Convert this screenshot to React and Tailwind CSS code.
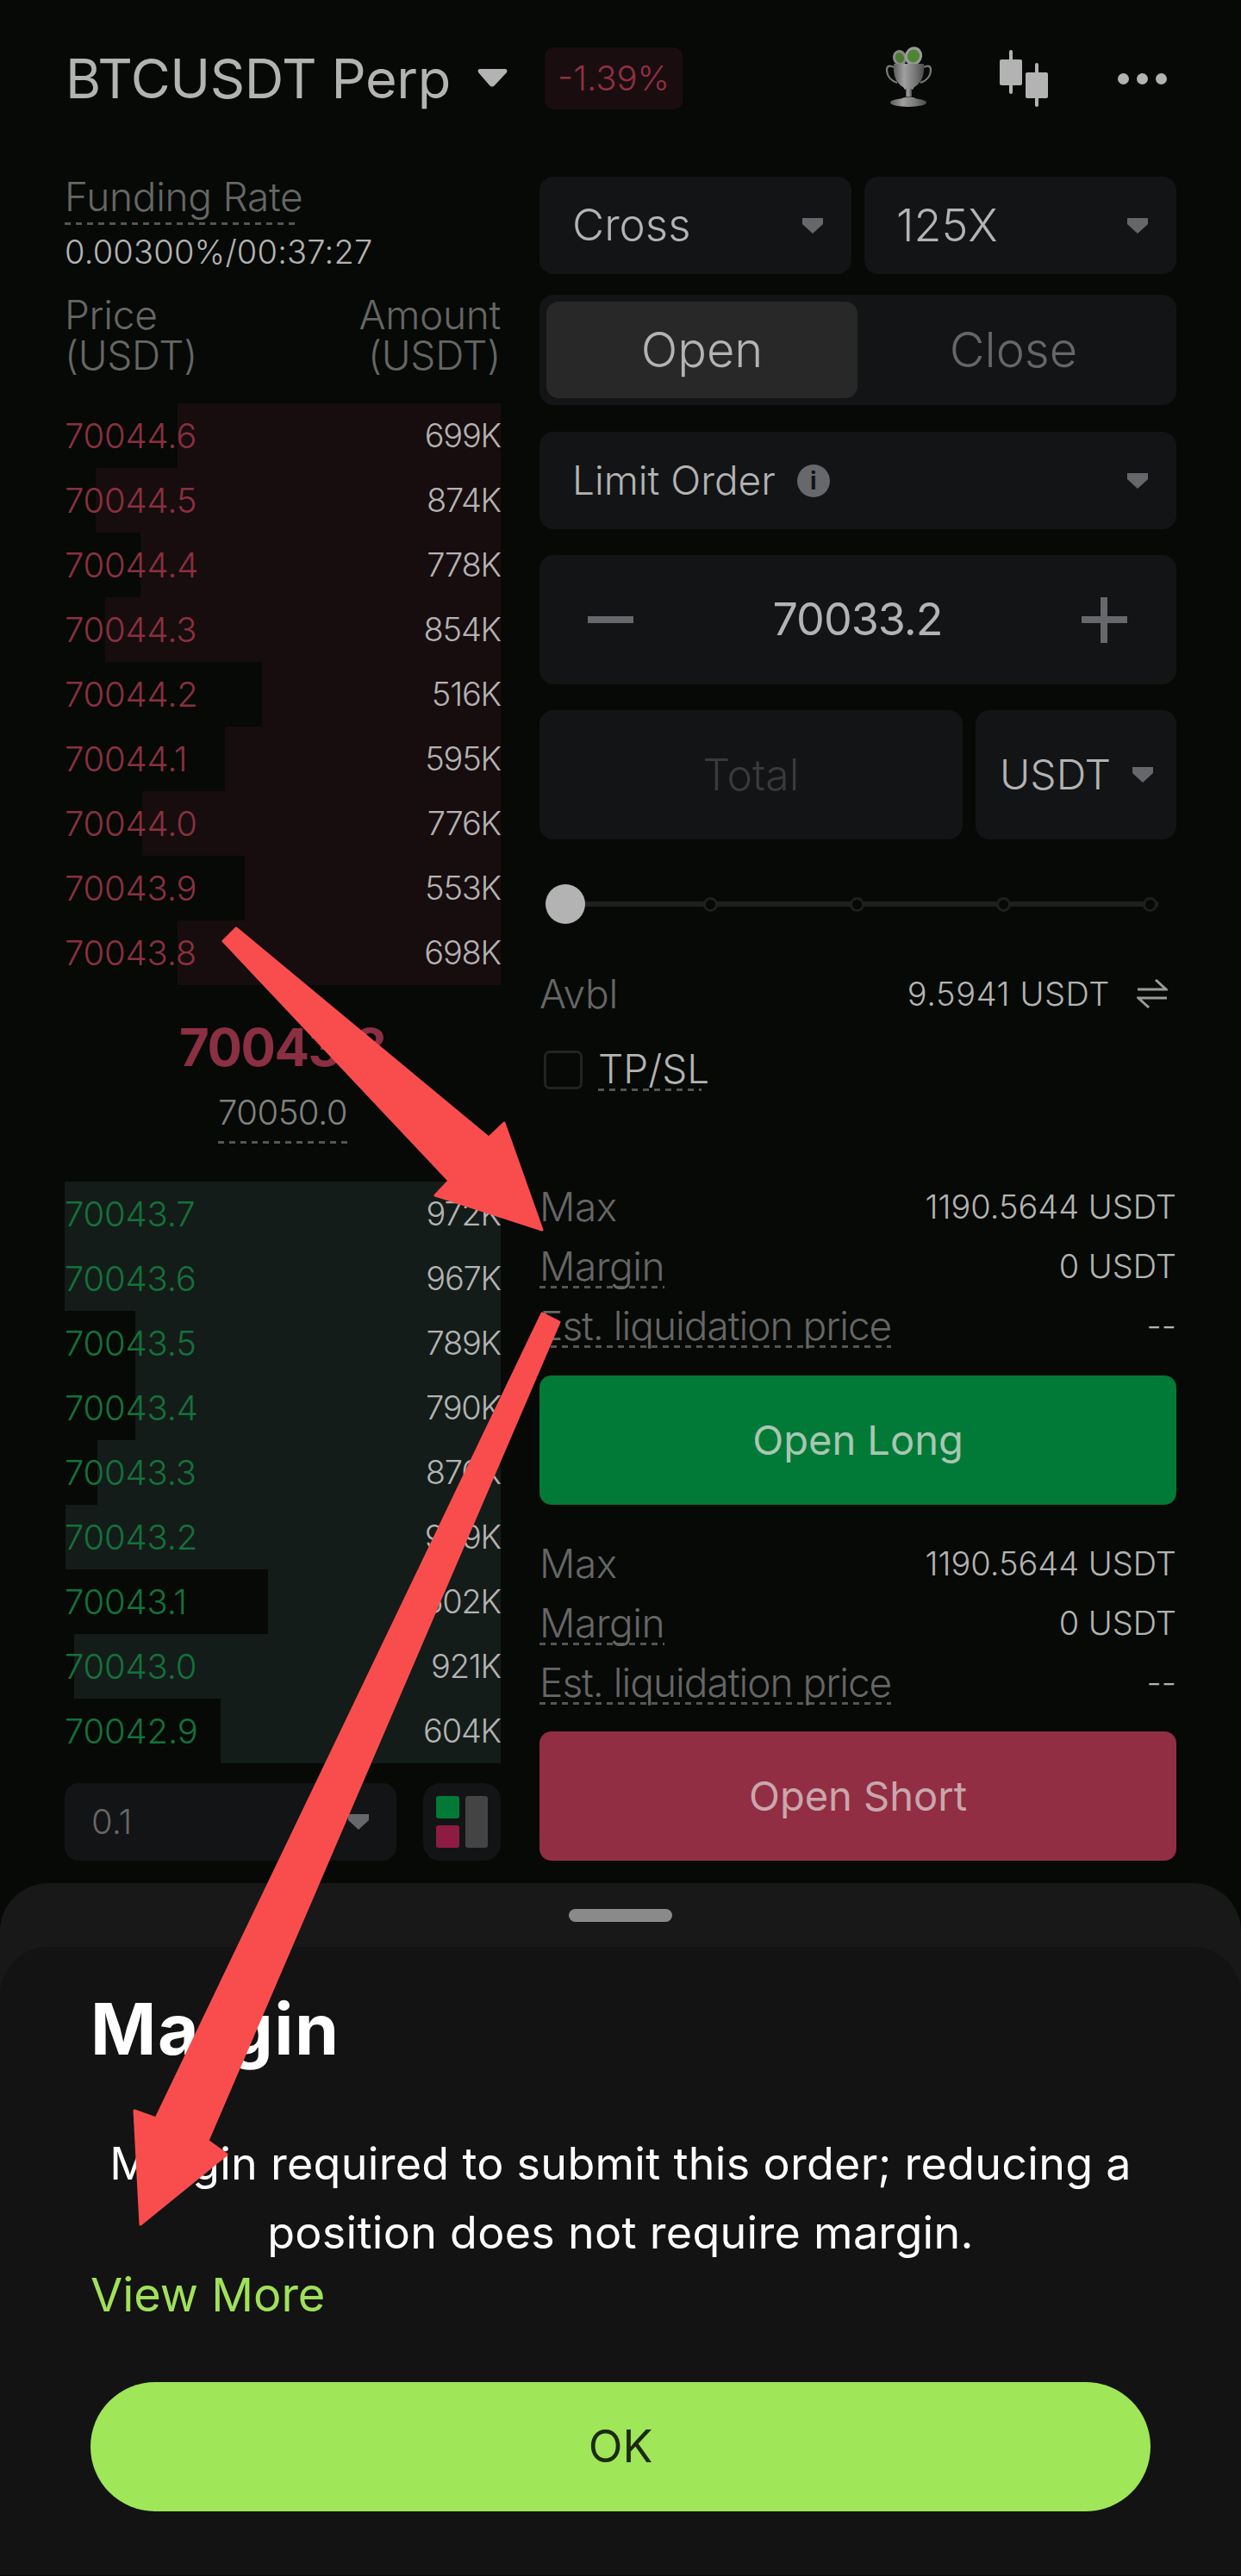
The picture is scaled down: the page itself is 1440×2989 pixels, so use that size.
import React from 'react';

const asks = [
  ['70044.6', '699K', 206], ['70044.5', '874K', 111], ['70044.4', '778K', 163],
  ['70044.3', '854K', 122], ['70044.2', '516K', 304], ['70044.1', '595K', 261],
  ['70044.0', '776K', 165], ['70043.9', '553K', 284], ['70043.8', '698K', 206],
];
const bids = [
  ['70043.7', '972K', 75], ['70043.6', '967K', 75], ['70043.5', '789K', 157],
  ['70043.4', '790K', 157], ['70043.3', '870K', 113], ['70043.2', '999K', 76],
  ['70043.1', '502K', 311], ['70043.0', '921K', 86], ['70042.9', '604K', 256],
];

function Caret({ className = '' }) {
  return (
    <svg viewBox="0 0 24 18" className={`w-[24px] h-[18px] shrink-0 ${className}`}>
      <path d="M0 0h24v7L12 18 0 7z" fill="#66676b" />
    </svg>
  );
}

function Dash({ className = '' }) {
  return <div className={`h-[3px] bg-[repeating-linear-gradient(90deg,#555_0_7px,transparent_7px_13px)] ${className}`} />;
}

function Box({ className = '', children }) {
  return <div className={`bg-[#131415] rounded-[16px] flex items-center ${className}`}>{children}</div>;
}

function BookRow({ price, amount, left, priceColor, barColor }) {
  return (
    <div className="relative h-[75px] flex items-center justify-between font-light">
      {/* depth bar, from its left edge to the column's right edge */}
      <div className={`absolute top-0 bottom-0 right-0 ${barColor}`} style={{ left: left - 75 }} />
      <span className={`relative text-[40px] tracking-[-0.2px] ${priceColor}`}>{price}</span>
      <span className="relative text-[38px] tracking-[-1.2px] text-[#b3b3b3]">{amount}</span>
    </div>
  );
}

function InfoRow({ label, value, dash, labelClass = 'tracking-[-0.5px]' }) {
  return (
    <div className="h-[50px] flex items-start justify-between">
      <div className={`mt-[2px] text-[46px] leading-[46px] font-light text-[#666] ${labelClass}`}>
        {label}
        {dash && <Dash className="w-full" />}
      </div>
      <span className="text-[38px] leading-[50px] font-light text-[#b3b3b3]">{value}</span>
    </div>
  );
}

function Trophy() {
  return (
    <svg viewBox="0 0 70 90" className="w-[70px] h-[90px] shrink-0">
      <defs>
        <linearGradient id="silver" x1="0" x2="1" y1="0" y2="0">
          <stop offset="0" stopColor="#5c5c5c" />
          <stop offset="0.35" stopColor="#a0a0a0" />
          <stop offset="0.7" stopColor="#787878" />
          <stop offset="1" stopColor="#4c4c4c" />
        </linearGradient>
      </defs>
      <ellipse cx="24" cy="21" rx="8" ry="9" fill="#8a8a8a" transform="rotate(-20 24 21)" />
      <ellipse cx="24" cy="21" rx="5" ry="6" fill="#4a7a30" transform="rotate(-20 24 21)" />
      <ellipse cx="40" cy="19" rx="10" ry="11" fill="#9a9a9a" transform="rotate(25 40 19)" />
      <ellipse cx="40" cy="19" rx="7" ry="7.5" fill="#4f8433" transform="rotate(25 40 19)" />
      <path d="M17 32C12 29 9 31 9 35c0 8 6 13 12 15M52 32c5-3 8-1 8 3 0 8-6 13-12 15" fill="none" stroke="#7a7a7a" strokeWidth="2.2" />
      <path d="M17 28h35c1 12-2 22-11 27l-2 3h-9l-2-3c-9-5-12-15-11-27z" fill="url(#silver)" />
      <rect x="31" y="57" width="7" height="9" fill="url(#silver)" />
      <path d="M27 68c2-2 13-2 15 0l2 3H25z" fill="#8c8c8c" />
      <ellipse cx="34" cy="73" rx="21" ry="5" fill="url(#silver)" />
    </svg>
  );
}

function Candles() {
  return (
    <svg viewBox="0 0 56 66" className="w-[56px] h-[66px] shrink-0" fill="#b3b3b3">
      <rect x="11" y="0" width="4" height="51" rx="2" />
      <rect x="0" y="11" width="26" height="30" rx="2" />
      <rect x="41" y="15" width="4" height="51" rx="2" />
      <rect x="30" y="26" width="26" height="30" rx="2" />
    </svg>
  );
}

function SwapIcon() {
  return (
    <svg viewBox="0 0 36 34" className="w-[36px] h-[34px] shrink-0" fill="none" stroke="#9a9a9a" strokeWidth="3">
      <path d="M1 12h33L22 1M35 22H2l12 11" />
    </svg>
  );
}

function SliderDot({ className = '' }) {
  return <div className={`relative w-[17px] h-[17px] rounded-full bg-[#060905] border-[3px] border-[#1f1f1f] shrink-0 ${className}`} />;
}

export default function App() {
  return (
    <div className="relative w-[1440px] h-[2989px] overflow-hidden bg-[#060905] font-['Inter',sans-serif]">
      {/* Header */}
      <div className="flex items-center h-[72px] mt-[55px] pt-0 pl-[76px]">
        <div className="w-[477px] shrink-0 text-[63px] leading-[72px] font-normal text-[#b3b3b3] tracking-[-0.4px]">BTCUSDT Perp</div>
        <svg viewBox="0 0 37 24" className="w-[37px] h-[24px] shrink-0 -mt-[2px]">
          <path d="M4 2h29c2 0 3 2 2 4L21 21c-2 2-4 2-6 0L2 6C1 4 2 2 4 2z" fill="#b3b3b3" />
        </svg>
        <div className="ml-[42px] w-[160px] h-[72px] shrink-0 rounded-[10px] bg-[#1a0d0f] flex items-center justify-center text-[40px] font-light text-[#8f3042]">-1.39%</div>
        <div className="ml-[228px]"><Trophy /></div>
        <div className="ml-[70px]"><Candles /></div>
        <div className="ml-[81px] flex items-center gap-[9px]">
          <div className="w-[13px] h-[13px] rounded-full bg-[#b3b3b3]" />
          <div className="w-[13px] h-[13px] rounded-full bg-[#b3b3b3]" />
          <div className="w-[13px] h-[13px] rounded-full bg-[#b3b3b3]" />
        </div>
      </div>

      <div className="flex items-start mt-[78px] ml-[75px]">
        {/* Order book */}
        <div className="w-[506px] shrink-0">
          <div className="inline-block text-[46px] leading-[46px] font-light text-[#666] tracking-[-0.3px]">
            Funding Rate
            <Dash className="mt-[7px] w-[270px]" />
          </div>
          <div className="mt-[8px] text-[38px] leading-[46px] font-light text-[#b3b3b3] tracking-[0.2px]">0.00300%/00:37:27</div>
          <div className="mt-[27px] flex justify-between text-[46px] leading-[47px] font-light text-[#666] tracking-[-0.3px]">
            <div>Price<br />(USDT)</div>
            <div className="text-right">Amount<br />(USDT)</div>
          </div>
          <div className="mt-[32px]">
            {asks.map(([price, amount, left]) => (
              <BookRow key={price} price={price} amount={amount} left={left} priceColor="text-[#8a3040]" barColor="bg-[#170d0e]" />
            ))}
          </div>
          <div className="mt-[37px] text-center text-[60px] leading-[70px] font-bold text-[#8b2f42] tracking-[-1.5px]">70043.8</div>
          <div className="mt-[18px] flex flex-col items-center">
            <div className="text-[40px] leading-[46px] font-light text-[#808080] tracking-[-0.5px]">70050.0</div>
            <Dash className="mt-[10px] w-[150px]" />
          </div>
          <div className="mt-[44px]">
            {bids.map(([price, amount, left]) => (
              <BookRow key={price} price={price} amount={amount} left={left} priceColor="text-[#14713a]" barColor="bg-[#141c19]" />
            ))}
          </div>
          <div className="mt-[23px] flex justify-between">
            <Box className="w-[385px] h-[90px] pl-[31px] pr-[32px] justify-between">
              <span className="text-[40px] font-light text-[#666]">0.1</span>
              <Caret />
            </Box>
            <Box className="w-[90px] h-[90px] rounded-[20px] justify-center gap-[7px]">
              <div className="flex flex-col gap-[8px]">
                <div className="w-[27px] h-[26px] rounded-[3px] bg-[#027a37]" />
                <div className="w-[27px] h-[26px] rounded-[3px] bg-[#8e1c42]" />
              </div>
              <div className="w-[26px] h-[60px] rounded-[3px] bg-[#444]" />
            </Box>
          </div>
        </div>

        {/* Order form */}
        <div className="w-[739px] ml-[45px] shrink-0">
          <div className="flex justify-between">
            <Box className="w-[362px] h-[113px] pl-[38px] pr-[33px] justify-between">
              <span className="text-[51px] font-light text-[#b3b3b3]">Cross</span>
              <Caret />
            </Box>
            <Box className="w-[362px] h-[113px] pl-[37px] pr-[33px] justify-between">
              <span className="text-[52px] font-light text-[#b3b3b3]">125X</span>
              <Caret />
            </Box>
          </div>
          <Box className="mt-[24px] h-[128px] p-[8px]">
            <div className="w-[361px] h-[112px] rounded-[14px] bg-[#282828] flex items-center justify-center text-[56px] font-light text-[#b3b3b3]">Open</div>
            <div className="flex-1 flex items-center justify-center text-[56px] font-light text-[#666]">Close</div>
          </Box>
          <Box className="mt-[31px] h-[113px] pl-[38px] pr-[33px]">
            <span className="text-[46px] font-light text-[#b3b3b3]">Limit Order</span>
            <div className="ml-[25px] w-[38px] h-[38px] rounded-full bg-[#67686c] flex items-center justify-center text-[28px] font-bold text-[#131415]">i</div>
            <Caret className="ml-auto" />
          </Box>
          <Box className="mt-[30px] h-[150px] pl-[56px] pr-[57px] justify-between">
            <div className="w-[53px] h-[8px] bg-[#66686c]" />
            <span className="text-[52px] font-normal text-[#b3b3b3] tracking-[-1px]">70033.2</span>
            <div className="relative w-[53px] h-[53px]">
              <div className="absolute left-0 right-0 top-[22px] h-[8px] bg-[#66686c]" />
              <div className="absolute top-0 bottom-0 left-[22px] w-[8px] bg-[#66686c]" />
            </div>
          </Box>
          <div className="mt-[30px] flex justify-between">
            <Box className="w-[491px] h-[150px] justify-center">
              <span className="text-[50px] font-light text-[#3a3a3b]">Total</span>
            </Box>
            <Box className="w-[233px] h-[150px] pl-[28px] pr-[27px] justify-between">
              <span className="text-[48px] font-light text-[#b3b3b3]">USDT</span>
              <Caret />
            </Box>
          </div>
          {/* Leverage slider */}
          <div className="relative mt-[52px] h-[46px] ml-[7px] w-[711px] flex items-center">
            <div className="absolute left-0 right-0 top-[20px] h-[6px] bg-[#1f1f1f]" />
            <div className="relative w-[46px] h-[46px] rounded-full bg-[#b3b3b3]" />
            <SliderDot className="ml-[137px]" />
            <SliderDot className="ml-[153px]" />
            <SliderDot className="ml-[153px]" />
            <SliderDot className="ml-[153px]" />
          </div>
          <div className="mt-[56px] h-[50px] flex items-center">
            <span className="text-[46px] font-light text-[#666] tracking-[-0.3px]">Avbl</span>
            <span className="ml-auto text-[38px] font-light text-[#b3b3b3] tracking-[0.6px]">9.5941 USDT</span>
            <div className="ml-[31px] mr-[10px]"><SwapIcon /></div>
          </div>
          <div className="mt-[38px] h-[50px] flex items-center pl-[5px]">
            <div className="w-[45px] h-[45px] rounded-[7px] border-[3px] border-[#232323]" />
            <div className="ml-[18px] text-[46px] leading-[46px] font-light text-[#b3b3b3]">
              TP/SL
              <Dash className="w-[120px]" />
            </div>
          </div>

          <div className="mt-[109px] flex flex-col gap-[19px]">
            <InfoRow label="Max" value="1190.5644 USDT" />
            <InfoRow label="Margin" value="0 USDT" dash />
            <InfoRow label="Est. liquidation price" value="--" dash labelClass="tracking-[-1px]" />
          </div>
          <div className="mt-[33px] h-[150px] rounded-[14px] bg-[#027a37] flex items-center justify-center text-[47px] font-normal text-[#a9c6b3]">Open Long</div>
          <div className="mt-[43px] flex flex-col gap-[19px]">
            <InfoRow label="Max" value="1190.5644 USDT" />
            <InfoRow label="Margin" value="0 USDT" dash />
            <InfoRow label="Est. liquidation price" value="--" dash labelClass="tracking-[-1px]" />
          </div>
          <div className="mt-[32px] h-[150px] rounded-[14px] bg-[#922e43] flex items-center justify-center text-[47px] font-normal text-[#c9a6ad]">Open Short</div>
        </div>
      </div>

      {/* Bottom sheet */}
      <div className="mt-[26px] h-[803px] rounded-t-[56px] bg-[#181818] pt-[30px]">
        <div className="mx-auto w-[120px] h-[15px] rounded-full bg-[#8a8a8a]" />
        <div className="mt-[29px] h-[729px] rounded-t-[56px] bg-[#131313] px-[105px] pt-[48px]">
          <div className="text-[82px] leading-[96px] font-bold text-white tracking-[1.5px]">Margin</div>
          <div className="mt-[68px] -mx-[40px] text-center text-[52px] leading-[80px] text-white tracking-[0.3px]">
            Margin required to submit this order; reducing a<br />position does not require margin.
          </div>
          <div className="mt-[2px] text-[54px] leading-[60px] text-[#a0e15a]">View More</div>
          <div className="mt-[71px] h-[150px] rounded-full bg-[#9fe658] flex items-center justify-center text-[52px] text-[#1c2a10]">OK</div>
        </div>
      </div>

      {/* Annotation arrows drawn over the screenshot */}
      <svg viewBox="0 0 1440 2989" className="absolute inset-0 w-[1440px] h-[2989px] pointer-events-none">
        <g fill="#f94d4d" stroke="#f94d4d" strokeWidth="3" strokeLinejoin="round">
          <polygon points="274,1077 259,1092 521,1370 505,1387 629,1427 585,1303 567,1320" />
          <polygon points="629,1524 649,1534 241,2484 263,2500 163,2581 156,2449 181,2458" />
        </g>
      </svg>
    </div>
  );
}
